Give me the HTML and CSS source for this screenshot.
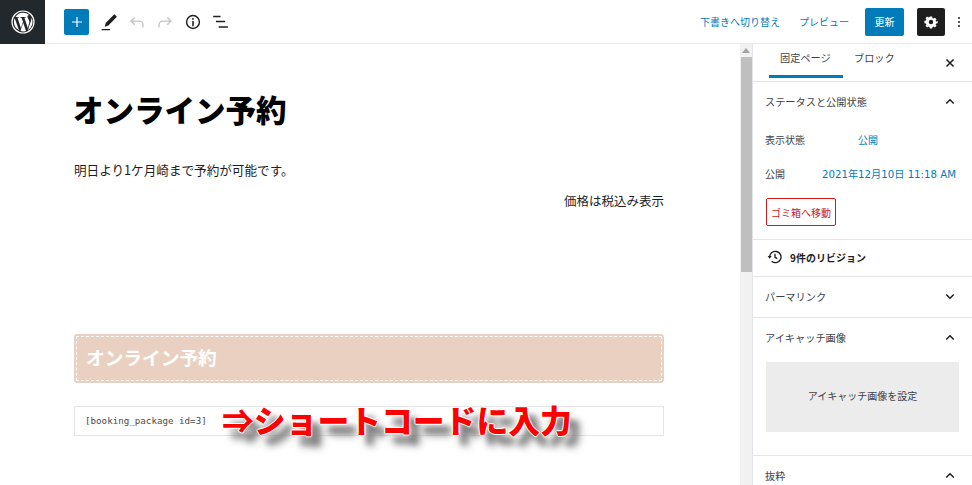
FILE: index.html
```html
<!DOCTYPE html>
<html lang="ja">
<head>
<meta charset="utf-8">
<title>オンライン予約</title>
<link rel="stylesheet" href="styles.css">
</head>
<body>
<header class="topbar">
  <div class="wp-logo">
    <svg viewBox="0 0 24 24" width="24" height="24"><circle cx="12" cy="12" r="11" fill="none" stroke="#fff" stroke-width="1.2"/><path fill="#fff" d="M2.9 12c0 3.6 2.1 6.7 5.1 8.2L3.7 8.3A9 9 0 0 0 2.9 12zm15.3-.5c0-1.100-.4-1.900-.8-2.500-.5-.8-.9-1.500-.9-2.300 0-.9.7-1.700 1.600-1.700h.1A9.100 9.100 0 0 0 4.500 7l.6 0c1 0 2.400-.1 2.400-.1.500 0 .6.700.1.800 0 0-.5.100-1.100.1l3.400 10.200 2.100-6.200-1.500-4c-.5 0-1-.1-1-.1-.5 0-.4-.8.100-.8 0 0 1.500.1 2.400.1 1 0 2.400-.1 2.400-.1.500 0 .6.700.1.800 0 0-.5.100-1.100.1l3.400 10.100.9-3.100c.4-1.300.7-2.200.7-3zM12.200 12.800l-2.800 8.200a9.200 9.200 0 0 0 5.600-.1l-.1-.1zM20.300 7.500c0 .3.100.6.100 1 0 .9-.2 2-.7 3.300l-2.800 8.100a9.100 9.100 0 0 0 3.400-12.400z"/></svg>
  </div>
  <div class="tools">
    <button class="add" type="button" aria-label="追加"><svg viewBox="0 0 24 24" width="12" height="12"><path d="M12 2v20M2 12h20" stroke="#fff" stroke-width="2.400" fill="none"/></svg></button>
    <svg class="tool pen" viewBox="0 0 24 24" width="22" height="22"><path fill="#1e1e1e" d="M17.800 3.500l2.800 2.800-9.300 9.500-4 1.300 1.100-4zM4 19.500h9V21H4z"/></svg>
    <svg class="tool" viewBox="0 0 24 24" width="22" height="22"><path fill="none" stroke="#c4c4c4" stroke-width="1.500" d="M9.500 7L5.500 11l4 4M5.500 11h9c2.200 0 4 1.800 4 4v3"/></svg>
    <svg class="tool" viewBox="0 0 24 24" width="22" height="22"><path fill="none" stroke="#c4c4c4" stroke-width="1.500" d="M14.500 7l4 4-4 4M18.500 11h-9c-2.200 0-4 1.800-4 4v3"/></svg>
    <svg class="tool" viewBox="0 0 24 24" width="22" height="22"><circle cx="12" cy="12" r="7" fill="none" stroke="#1e1e1e" stroke-width="1.600"/><path d="M12 10.800V16.500M12 7.500v2" stroke="#1e1e1e" stroke-width="1.700"/></svg>
    <svg class="tool" viewBox="0 0 24 24" width="22" height="22"><path fill="none" stroke="#1e1e1e" stroke-width="1.500" d="M3.500 6h8M6.500 11.500h10M9.500 17.500h10"/></svg>
  </div>
  <div class="actions">
    <a class="link draft">下書きへ切り替え</a>
    <a class="link preview">プレビュー</a>
    <button class="update" type="button">更新</button>
    <button class="settings" type="button" aria-label="設定"><svg viewBox="0 0 24 24" width="18" height="18"><path fill="#fff" d="M10 3h4l.5 2.600 1.700.7 2.200-1.500 2.800 2.800-1.500 2.200.7 1.700L23 10v4l-2.600.5-.7 1.700 1.500 2.200-2.800 2.800-2.200-1.500-1.700.7L14 23h-4l-.5-2.600-1.700-.7-2.200 1.500-2.800-2.800 1.500-2.200-.7-1.700L1 14v-4l2.600-.5.7-1.700-1.500-2.200 2.800-2.800 2.200 1.500 1.700-.7z" transform="translate(2.400 2.400) scale(.8)"/><circle cx="12" cy="12" r="3" fill="#1e1e1e"/></svg></button>
    <div class="more"><i></i><i></i><i></i></div>
  </div>
</header>
<div class="main">
  <main class="editor">
    <div class="content">
      <h1 class="title">オンライン予約</h1>
      <p class="lead">明日より1ケ月崎まで予約が可能です。</p>
      <p class="price">価格は税込み表示</p>
      <h2 class="band">オンライン予約</h2>
      <div class="shortcode">[booking_package id=3]</div>
    </div>
    <div class="annotation">⇒ショートコードに入力</div>
  </main>
  <div class="scrollbar">
    <svg class="arrow" viewBox="0 0 8 5" width="8" height="5"><path d="M4 0l4 5H0z" fill="#a3a3a3"/></svg>
    <div class="thumb"></div>
  </div>
  <aside class="sidebar">
    <div class="tabs">
      <span class="tab active">固定ページ</span>
      <span class="tab">ブロック</span>
      <svg class="close" viewBox="0 0 24 24" width="12" height="12"><path d="M5 5l14 14M19 5L5 19" stroke="#1e1e1e" stroke-width="3"/></svg>
    </div>
    <section class="panel status">
      <div class="panel-head"><span>ステータスと公開状態</span><svg viewBox="0 0 12 8" width="10" height="7"><path d="M1.500 6.500L6 2l4.500 4.500" fill="none" stroke="#1e1e1e" stroke-width="1.800"/></svg></div>
      <div class="row visibility"><span>表示状態</span><a class="val">公開</a></div>
      <div class="row publish"><span>公開</span><a class="val date">2021年12月10日 11:18 AM</a></div>
      <button class="trash" type="button">ゴミ箱へ移動</button>
    </section>
    <section class="panel revisions">
      <svg viewBox="0 0 24 24" width="16" height="16"><path fill="none" stroke="#1e1e1e" stroke-width="2" d="M4 12a8.500 8.500 0 1 1 3 6.500M12 7v5.500l3.500 2"/><path d="M1 10.500h6L4 14.500z" fill="#1e1e1e"/></svg>
      <span>9件のリビジョン</span>
    </section>
    <section class="panel permalink">
      <div class="panel-head"><span>パーマリンク</span><svg viewBox="0 0 12 8" width="10" height="7"><path d="M1.500 1.500L6 6l4.500-4.500" fill="none" stroke="#1e1e1e" stroke-width="1.800"/></svg></div>
    </section>
    <section class="panel featured">
      <div class="panel-head"><span>アイキャッチ画像</span><svg viewBox="0 0 12 8" width="10" height="7"><path d="M1.500 6.500L6 2l4.500 4.500" fill="none" stroke="#1e1e1e" stroke-width="1.800"/></svg></div>
      <div class="feature-box">アイキャッチ画像を設定</div>
    </section>
    <section class="panel excerpt">
      <div class="panel-head"><span>抜粋</span><svg viewBox="0 0 12 8" width="10" height="7"><path d="M1.500 6.500L6 2l4.500 4.500" fill="none" stroke="#1e1e1e" stroke-width="1.800"/></svg></div>
    </section>
  </aside>
</div>
</body>
</html>
```

FILE: styles.css
```css
* { box-sizing: border-box; }
html, body { margin: 0; height: 100%; overflow: hidden; }
body {
  background: #fff;
  color: #1e1e1e;
  font-family: "Noto Sans CJK JP", "Noto Sans", sans-serif;
  font-size: 10px;
}
button { font-family: inherit; border: 0; padding: 0; }
.topbar {
  height: 44px;
  display: flex;
  align-items: center;
  border-bottom: 1px solid #e4e9ea;
}
.wp-logo {
  width: 45px;
  height: 44px;
  background: #23282d;
  display: flex;
  align-items: center;
  justify-content: center;
}
.tools {
  display: flex;
  align-items: center;
  margin-left: 19px;
  gap: 6px;
}
.add {
  width: 25px;
  height: 26px;
  background: #007cba;
  border-radius: 2px;
  display: flex;
  align-items: center;
  justify-content: center;
  margin-right: 3px;
}
.actions {
  margin-left: auto;
  display: flex;
  align-items: center;
}
.link { color: #007cba; font-size: 10px; }
.draft { width: 99px; }
.preview { width: 66px; }
.update {
  width: 39px;
  height: 28px;
  background: #007cba;
  color: #fff;
  font-size: 10px;
  border-radius: 2px;
}
.settings {
  width: 28px;
  height: 28px;
  margin-left: 13px;
  background: #1e1e1e;
  border-radius: 2px;
  display: flex;
  align-items: center;
  justify-content: center;
}
.more {
  width: 27px;
  display: flex;
  flex-direction: column;
  align-items: center;
  gap: 2px;
}
.more i { width: 2px; height: 2px; background: #1e1e1e; border-radius: 50%; }
.main { display: flex; height: 441px; }
.editor { width: 740px; position: relative; padding-left: 74px; overflow: hidden; }
.content { width: 590px; }
.title {
  margin: 43px 0 0 -1px;
  font-size: 30.500px;
  line-height: 44px;
  font-weight: 900;
  color: #000;
}
.lead { margin: 29px 0 0; font-size: 12.600px; line-height: 20px; }
.price { margin: 11px 0 0; font-size: 12.500px; line-height: 20px; text-align: right; }
.band {
  margin: 123px 0 0;
  height: 49px;
  background: #e9d0c1;
  border-radius: 3px;
  color: #fff;
  font-size: 18.700px;
  font-weight: 700;
  line-height: 45px;
  padding-left: 12px;
  outline: 1px dashed #fff;
  outline-offset: -3px;
}
.shortcode {
  margin-top: 23px;
  height: 30px;
  border: 1px solid #e2e4e7;
  font-family: "DejaVu Sans Mono", monospace;
  font-size: 9.200px;
  line-height: 28px;
  padding-left: 10px;
  color: #4a4a4a;
}
.annotation {
  position: absolute;
  left: 222px;
  top: 353px;
  color: #f00;
  font-size: 31.800px;
  line-height: 44px;
  font-weight: 900;
  white-space: nowrap;
  text-shadow:
    1px 0 0 #fff, -1px 0 0 #fff, 0 1px 0 #fff, 0 -1px 0 #fff,
    8px 9px 6px #777, 10px 11px 8px #999;
}
.scrollbar { width: 12px; background: #f1f1f1; display: flex; flex-direction: column; align-items: center; }
.arrow { margin-top: 4px; }
.thumb { width: 11px; height: 215px; margin-top: 4px; background: #bfbfbf; }
.sidebar { width: 220px; border-left: 1px solid #e2e4e7; }
.tabs {
  height: 38px;
  display: flex;
  align-items: flex-start;
  padding-left: 16px;
  position: relative;
  border-bottom: 1px solid #e2e4e7;
}
.tab { font-size: 10.200px; line-height: 16px; color: #3c434a; padding-top: 6px; }
.tab:last-of-type { margin-left: 11px; }
.tab.active {
  width: 74px;
  height: 34px;
  padding-left: 11px;
  border-bottom: 3px solid #007cba;
}
.close { position: absolute; right: 16px; top: 13px; }
.panel { border-bottom: 1px solid #e2e4e7; }
.panel-head {
  display: flex;
  justify-content: space-between;
  align-items: center;
  font-size: 10.200px;
  color: #3c434a;
  padding: 0 17px 0 12px;
  height: 38px;
}
.status { height: 158px; }
.row { display: flex; align-items: center; padding-left: 12px; height: 20px; font-size: 10px; color: #3c434a; }
.visibility { margin-top: 9px; }
.publish { margin-top: 14px; justify-content: space-between; padding-right: 16px; }
.visibility .val { margin-left: 53px; }
.val { color: #007cba; }
.date { font-family: "DejaVu Sans", "Noto Sans CJK JP", sans-serif; font-size: 10.200px; }
.trash {
  display: block;
  margin: 15px 0 0 13px;
  width: 70px;
  height: 28px;
  background: #fff;
  border: 1px solid #cc1818;
  border-radius: 2px;
  color: #cc1818;
  font-size: 10px;
}
.revisions {
  height: 37px;
  display: flex;
  align-items: center;
  padding-left: 14px;
  padding-bottom: 2px;
  gap: 7px;
  font-size: 10px;
  font-weight: 700;
}
.permalink { height: 41px; }
.featured { height: 138px; }
.feature-box {
  margin: 6px 0 0 13px;
  width: 193px;
  height: 70px;
  background: #ececec;
  display: flex;
  align-items: center;
  justify-content: center;
  padding-bottom: 3px;
  font-size: 10px;
  color: #3c434a;
}
```
